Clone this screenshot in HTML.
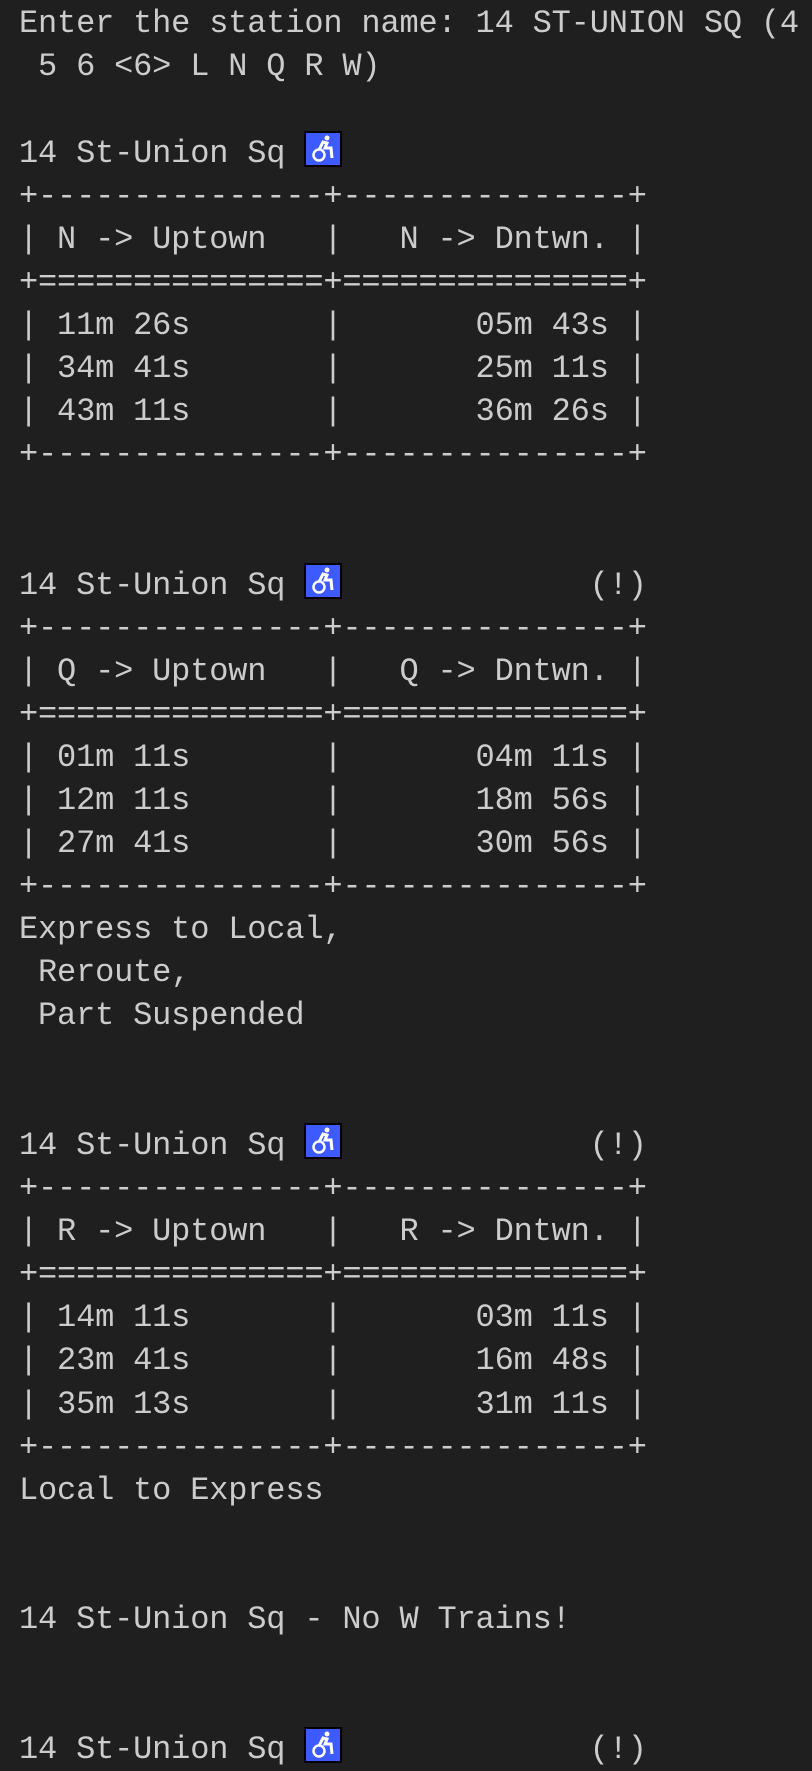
<!DOCTYPE html>
<html><head><meta charset="utf-8"><style>
html,body{margin:0;padding:0;background:#1f1f1f;}
body{width:812px;height:1762px;overflow:hidden;}
pre{margin:0;padding:2px 0 0 19px;font-family:"Liberation Mono",monospace;font-size:32px;letter-spacing:-0.18px;line-height:43.05px;color:#cccccc;white-space:pre;}
.w{display:inline-block;width:34px;height:32px;background:#3d5afe;border:2px solid #000;vertical-align:-5px;position:relative;letter-spacing:0;}
.w svg{position:absolute;left:0;top:0;}
</style></head><body><pre>Enter the station name: 14 ST-UNION SQ (4
 5 6 &lt;6&gt; L N Q R W)

14 St-Union Sq <span class="w"><svg width="34" height="32" viewBox="0 0 34 32"><circle cx="21" cy="5" r="2.5" fill="#fff"/><path d="M13 17 L17 9 L21 10 L19 15 L25 15 L26 25" stroke="#fff" stroke-width="3" fill="none"/><circle cx="13" cy="22" r="5.5" stroke="#fff" stroke-width="2.5" fill="none"/></svg></span>
+---------------+---------------+
| N -&gt; Uptown   |   N -&gt; Dntwn. |
+===============+===============+
| 11m 26s       |       05m 43s |
| 34m 41s       |       25m 11s |
| 43m 11s       |       36m 26s |
+---------------+---------------+


14 St-Union Sq <span class="w"><svg width="34" height="32" viewBox="0 0 34 32"><circle cx="21" cy="5" r="2.5" fill="#fff"/><path d="M13 17 L17 9 L21 10 L19 15 L25 15 L26 25" stroke="#fff" stroke-width="3" fill="none"/><circle cx="13" cy="22" r="5.5" stroke="#fff" stroke-width="2.5" fill="none"/></svg></span>             (!)
+---------------+---------------+
| Q -&gt; Uptown   |   Q -&gt; Dntwn. |
+===============+===============+
| 01m 11s       |       04m 11s |
| 12m 11s       |       18m 56s |
| 27m 41s       |       30m 56s |
+---------------+---------------+
Express to Local,
 Reroute,
 Part Suspended


14 St-Union Sq <span class="w"><svg width="34" height="32" viewBox="0 0 34 32"><circle cx="21" cy="5" r="2.5" fill="#fff"/><path d="M13 17 L17 9 L21 10 L19 15 L25 15 L26 25" stroke="#fff" stroke-width="3" fill="none"/><circle cx="13" cy="22" r="5.5" stroke="#fff" stroke-width="2.5" fill="none"/></svg></span>             (!)
+---------------+---------------+
| R -&gt; Uptown   |   R -&gt; Dntwn. |
+===============+===============+
| 14m 11s       |       03m 11s |
| 23m 41s       |       16m 48s |
| 35m 13s       |       31m 11s |
+---------------+---------------+
Local to Express


14 St-Union Sq - No W Trains!


14 St-Union Sq <span class="w"><svg width="34" height="32" viewBox="0 0 34 32"><circle cx="21" cy="5" r="2.5" fill="#fff"/><path d="M13 17 L17 9 L21 10 L19 15 L25 15 L26 25" stroke="#fff" stroke-width="3" fill="none"/><circle cx="13" cy="22" r="5.5" stroke="#fff" stroke-width="2.5" fill="none"/></svg></span>             (!)
</pre></body></html>
